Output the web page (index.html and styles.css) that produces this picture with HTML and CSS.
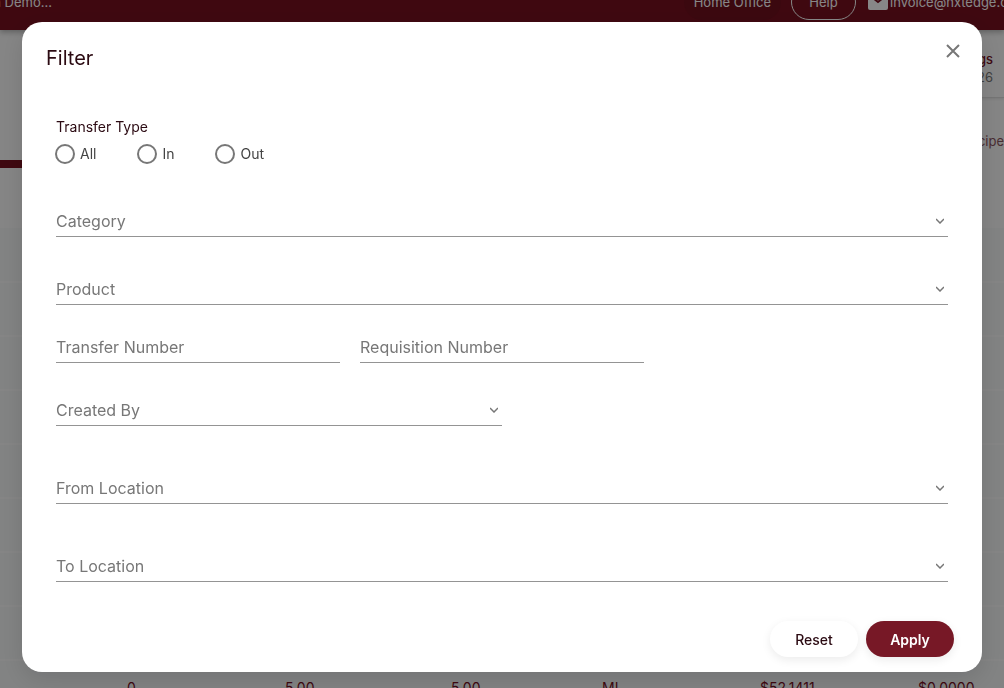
FILE: index.html
```html
<!DOCTYPE html>
<html lang="en">
<head>
  <meta charset="UTF-8">
  <title>Transfers</title>
  <link rel="stylesheet" href="styles.css">
</head>
<body>

  <div class="page">
    <header class="topbar">
      <span class="store">n Demo...</span>
      <span class="office">Home Office</span>
      <button class="help" type="button">Help</button>
      <a class="mail" href="#">
        <svg width="20" height="16" viewBox="0 0 20 16"><rect width="20" height="16" rx="2" fill="currentColor"/><path d="M5 4l5 4 5-4" fill="none" stroke="#77101f" stroke-width="2"/></svg>
        <span>invoice@nxtedge.com</span>
      </a>
    </header>

    <div class="summary">
      <div class="summary-card">
        <div class="summary-name">Settings</div>
        <div class="summary-date">2026</div>
      </div>
    </div>
    <nav class="tabs">
      <span class="tab-active"></span>
      <a href="#">Recipe</a>
    </nav>

    <table class="transfers">
      <colgroup>
        <col class="col-first"><col class="col-wide"><col class="col-narrow"><col class="col"><col class="col"><col>
      </colgroup>
      <tbody>
        <tr><td colspan="6"></td></tr>
        <tr><td colspan="6"></td></tr>
        <tr><td colspan="6"></td></tr>
        <tr><td colspan="6"></td></tr>
        <tr><td colspan="6"></td></tr>
        <tr><td colspan="6"></td></tr>
        <tr><td colspan="6"></td></tr>
        <tr><td colspan="6"></td></tr>
        <tr><td>0</td><td>5.00</td><td>5.00</td><td>ML</td><td>$52.1411</td><td>$0.0000</td></tr>
      </tbody>
    </table>
  </div>

  <div class="overlay">
    <form class="dialog" role="dialog" aria-labelledby="dialogTitle">
      <div class="dialog-head">
        <h2 id="dialogTitle">Filter</h2>
        <button class="close" type="button" aria-label="Close">
          <svg width="14" height="14" viewBox="0 0 14 14"><path d="M1 1l12 12M13 1L1 13" fill="none" stroke="currentColor" stroke-width="2"/></svg>
        </button>
      </div>

      <div class="dialog-body">
        <fieldset class="types">
          <legend>Transfer Type</legend>
          <div class="radios">
            <label><input type="radio" name="type" value="all">All</label>
            <label><input type="radio" name="type" value="in">In</label>
            <label><input type="radio" name="type" value="out">Out</label>
          </div>
        </fieldset>

        <div class="field category">
          <select aria-label="Category"><option>Category</option></select>
          <svg class="arrow" width="8" height="6" viewBox="0 0 8 6"><path d="M0 1l4 4 4-4" fill="none" stroke="currentColor" stroke-width="1.5"/></svg>
        </div>
        <div class="field product">
          <select aria-label="Product"><option>Product</option></select>
          <svg class="arrow" width="8" height="6" viewBox="0 0 8 6"><path d="M0 1l4 4 4-4" fill="none" stroke="currentColor" stroke-width="1.5"/></svg>
        </div>
        <div class="numbers">
          <div class="field"><input type="text" placeholder="Transfer Number" aria-label="Transfer Number"></div>
          <div class="field"><input type="text" placeholder="Requisition Number" aria-label="Requisition Number"></div>
        </div>
        <div class="field created">
          <select aria-label="Created By"><option>Created By</option></select>
          <svg class="arrow" width="8" height="6" viewBox="0 0 8 6"><path d="M0 1l4 4 4-4" fill="none" stroke="currentColor" stroke-width="1.5"/></svg>
        </div>
        <div class="field location">
          <select aria-label="From Location"><option>From Location</option></select>
          <svg class="arrow" width="8" height="6" viewBox="0 0 8 6"><path d="M0 1l4 4 4-4" fill="none" stroke="currentColor" stroke-width="1.5"/></svg>
        </div>
        <div class="field location">
          <select aria-label="To Location"><option>To Location</option></select>
          <svg class="arrow" width="8" height="6" viewBox="0 0 8 6"><path d="M0 1l4 4 4-4" fill="none" stroke="currentColor" stroke-width="1.5"/></svg>
        </div>
      </div>

      <div class="actions">
        <button class="btn" type="reset">Reset</button>
        <button class="btn apply" type="submit">Apply</button>
      </div>
    </form>
  </div>

</body>
</html>
```
FILE: styles.css
```css
* {
  box-sizing: border-box;
}

body {
  margin: 0;
  height: 100vh;
  overflow: hidden;
  font-family: Inter, "Liberation Sans", sans-serif;
  font-size: 13px;
  color: #2b0a12;
}

button,
input,
select {
  font: inherit;
}

/* page behind the dialog, scrolled down a little */
.page {
  margin-top: -26px;
  background: #fcfcfc;
}

.topbar {
  height: 56px;
  display: flex;
  align-items: center;
  background: #77101f;
  color: #fff;
  box-shadow: 0 2px 6px rgba(0, 0, 0, 0.3);
  position: relative;
  overflow: hidden;
}

.store {
  width: 52px;
  display: flex;
  justify-content: flex-end;
  white-space: nowrap;
}

.office {
  margin-left: auto;
  padding: 10px;
  border-radius: 18px;
  background: #70101e;
}

.help {
  width: 65px;
  height: 36px;
  margin: 0 12px 0 10px;
  border: 1px solid #fff;
  border-radius: 18px;
  background: none;
  color: #fff;
}

.mail {
  width: 136px;
  display: flex;
  align-items: center;
  gap: 2px;
  color: #fff;
  text-decoration: none;
}

.mail svg {
  flex: none;
}

.summary {
  height: 68px;
  display: flex;
  justify-content: flex-end;
}

.summary-card {
  width: 240px;
  padding: 20px 11px 0;
  border-bottom: 1px solid #ddd;
  box-shadow: 0 1px 3px rgba(0, 0, 0, 0.1);
  text-align: right;
  line-height: 18px;
}

.summary-name {
  color: #77101f;
  font-weight: 500;
}

.summary-date {
  color: #777;
}

.tabs {
  height: 70px;
  display: flex;
  justify-content: space-between;
  align-items: flex-end;
}

.tab-active {
  width: 120px;
  height: 8px;
  background: #77101f;
}

.tabs a {
  padding-bottom: 19px;
  color: #8a5560;
  text-decoration: none;
}

.transfers {
  width: 100%;
  margin-top: 60px;
  border-collapse: collapse;
  table-layout: fixed;
}

.col-first {
  width: 285px;
}

.col-wide {
  width: 166px;
}

.col-narrow {
  width: 151px;
}

.col {
  width: 158px;
}

.transfers td {
  height: 54px;
  padding: 0;
  background: #f5f7f8;
  border-bottom: 2px solid #fcfcfc;
  color: #77101f;
  font-size: 14px;
}

.transfers td:first-child {
  padding-left: 127px;
}

.overlay {
  position: fixed;
  inset: 0;
  padding: 22px;
  background: rgba(0, 0, 0, 0.47);
}

.dialog {
  padding: 20px 24px 15px;
  border-radius: 20px;
  background: #fff;
  box-shadow: 0 8px 24px rgba(0, 0, 0, 0.12);
  font-size: 14px;
}

.dialog-head {
  height: 32px;
  display: flex;
  justify-content: space-between;
}

.dialog-head h2 {
  margin: 0;
  font-size: 20px;
  font-weight: 400;
  line-height: 32px;
}

.close {
  width: 14px;
  height: 14px;
  margin: 2px -2px 0 0;
  padding: 0;
  border: 0;
  background: none;
  color: #777;
  display: flex;
}

.dialog-body {
  padding: 43px 10px 0;
}

.types {
  margin: 0;
  padding: 0;
  border: 0;
}

.types legend {
  padding: 0;
  line-height: 20px;
}

.radios {
  display: flex;
  gap: 41px;
  padding-top: 7px;
  margin-left: -1px;
}

.radios label {
  display: flex;
  align-items: center;
  gap: 5px;
  line-height: 20px;
  color: #444;
}

.radios input {
  appearance: none;
  width: 20px;
  height: 20px;
  margin: 0;
  border: 2px solid #777;
  border-radius: 50%;
}

.radios input:checked {
  background: #77101f;
  box-shadow: inset 0 0 0 3px #fff;
}

.field {
  height: 30px;
  display: flex;
  align-items: center;
  padding-bottom: 2px;
  border-bottom: 1px solid #949494;
  color: #777;
  font-size: 16px;
}

.field select,
.field input {
  appearance: none;
  flex: 1;
  min-width: 0;
  height: 27px;
  padding: 0;
  border: 0;
  outline: 0;
  background: none;
  color: #777;
}

.field input::placeholder {
  color: #777;
  opacity: 1;
}

.arrow {
  flex: none;
  margin-right: 4px;
  pointer-events: none;
}

.category {
  margin-top: 43px;
}

.product {
  margin-top: 38px;
}

.numbers {
  display: grid;
  grid-template-columns: repeat(3, 1fr);
  gap: 20px;
  margin-top: 28px;
}

.created {
  width: 50%;
  margin-top: 33px;
}

.location {
  margin-top: 48px;
}

.actions {
  display: flex;
  justify-content: flex-end;
  gap: 8px;
  margin-top: 39px;
  padding-right: 4px;
}

.btn {
  width: 88px;
  height: 36px;
  border: 0;
  border-radius: 18px;
  background: #fff;
  color: #2b0a12;
  font-weight: 500;
  box-shadow: 0 3px 10px rgba(0, 0, 0, 0.08);
}

.apply {
  background: #771826;
  color: #fff;
  font-weight: 600;
}
```
